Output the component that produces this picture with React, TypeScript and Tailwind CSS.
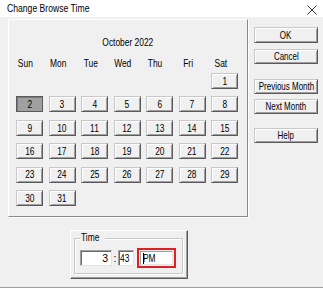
import React from 'react';

const dayNames = ['Sun', 'Mon', 'Tue', 'Wed', 'Thu', 'Fri', 'Sat'];

// October 2022 starts on a Saturday
const cells: (number | null)[] = [
  null, null, null, null, null, null, 1,
  ...Array.from({ length: 30 }, (_, i) => i + 2),
];

const raised =
  'border border-t-[#c8c8c8] border-l-[#c8c8c8] border-b-[#5a5a5a] border-r-[#5a5a5a] shadow-[inset_1px_1px_0_#ffffff,inset_-1px_-1px_0_#a0a0a0]';

const sunken =
  'bg-white border border-t-[#a0a0a0] border-l-[#a0a0a0] border-b-[#e3e3e3] border-r-[#e3e3e3] shadow-[inset_1px_1px_0_#696969]';

// the dialog font is narrower than Arial, so squeeze it a little
function T({ children, left }: { children: React.ReactNode; left?: boolean }) {
  return (
    <span className={`inline-block whitespace-nowrap scale-x-[0.8] ${left ? 'origin-left' : 'origin-center'}`}>
      {children}
    </span>
  );
}

function DayButton({ day, selected }: { day: number; selected?: boolean }) {
  return (
    <div
      className={`h-[16px] w-[27px] flex items-center justify-center text-[10.5px] leading-none text-black ${
        selected
          ? 'bg-[#a0a0a0] border border-[#5a5a5a] shadow-[inset_1px_1px_0_#7a7a7a]'
          : `bg-[#f0f0f0] ${raised}`
      }`}
    >
      <T>{day}</T>
    </div>
  );
}

function SideButton({ label, className = '' }: { label: string; className?: string }) {
  return (
    <div
      className={`h-[15px] w-[64px] flex items-center justify-center bg-[#f0f0f0] text-[10.5px] leading-none text-black ${raised} ${className}`}
    >
      <span className="inline-block whitespace-nowrap scale-x-[0.76]">{label}</span>
    </div>
  );
}

export default function App() {
  return (
    <div className="w-[323px] h-[288px] bg-[#f0f0f0] flex flex-col border-b border-[#74a8d8] font-['Liberation_Sans',Arial,sans-serif] overflow-hidden">
      {/* title bar */}
      <div className="h-[17px] bg-white flex items-center justify-between pl-[7px] pr-[6px] shrink-0">
        <span className="text-[11.5px] leading-none text-black">
          <span className="inline-block whitespace-nowrap scale-x-[0.75] origin-left">Change Browse Time</span>
        </span>
        <svg width="10" height="10" viewBox="0 0 10 10" className="mt-[2px]">
          <path d="M0.5 0.5 L9.5 9.5 M9.5 0.5 L0.5 9.5" stroke="#333" strokeWidth="1" fill="none" />
        </svg>
      </div>

      <div className="flex flex-1">
        {/* left column */}
        <div className="flex flex-col pl-[8px] pt-[2px]">
          <div className="w-[240px] h-[198px] border border-t-[#ffffff] border-l-[#ffffff] border-b-[#8a8a8a] border-r-[#8a8a8a] shadow-[1px_1px_0_#ffffff] flex flex-col">
            <div className="mt-[16px] text-center text-[10.5px] leading-[13px] text-black">
              <T>October 2022</T>
            </div>
            <div className="mt-[8px] ml-[3px] grid grid-cols-[repeat(7,27px)] gap-x-[5.5px]">
              {dayNames.map((n) => (
                <div key={n} className="text-center text-[10.5px] leading-[13px] text-black">
                  <T>{n}</T>
                </div>
              ))}
            </div>
            <div className="mt-[3px] ml-[7px] grid grid-cols-[repeat(7,27px)] gap-x-[5.5px] gap-y-[7.4px]">
              {cells.map((d, i) =>
                d === null ? (
                  <div key={i} className="h-[16px]" />
                ) : (
                  <DayButton key={i} day={d} selected={d === 2} />
                )
              )}
            </div>
          </div>

          {/* time box */}
          <div className="mt-[13px] ml-[62px] w-[118px] h-[49px] border border-t-[#ffffff] border-l-[#ffffff] border-b-[#5a5a5a] border-r-[#5a5a5a] shadow-[inset_-1px_-1px_0_#a0a0a0] pt-[7px] pl-[3px]">
            <div className="relative w-[109px] h-[36px] border border-[#c8c8c8] shadow-[1px_1px_0_#ffffff,inset_1px_1px_0_#ffffff]">
              <span className="absolute left-[5px] top-[-8px] px-[1px] bg-[#f0f0f0] text-[10.5px] leading-[13px] text-black">
                <T left>Time</T>
              </span>
              <div className="flex items-center mt-[9px] ml-[5px]">
                <div className={`w-[32px] h-[16px] flex items-center justify-end pr-[3px] text-[10.5px] leading-none text-black ${sunken}`}>
                  3
                </div>
                <span className="w-[6px] text-center text-[10.5px] leading-none text-black">:</span>
                <div className={`w-[16px] h-[16px] flex items-center pl-[1px] text-[10.5px] leading-none text-black ${sunken}`}>
                  <T left>43</T>
                </div>
                <div className="ml-[3px] w-[39px] h-[20px] border-2 border-[#e02020] flex items-center justify-center">
                  <div className="w-[33px] h-[14px] bg-white border border-t-[#a0a0a0] border-l-[#a0a0a0] border-b-[#e3e3e3] border-r-[#e3e3e3] flex items-center pl-[2px] text-[10.5px] leading-none text-black">
                    <span className="w-[1px] h-[11px] bg-black mr-[-1px]" />
                    <T left>PM</T>
                  </div>
                </div>
              </div>
            </div>
          </div>
        </div>

        {/* right column */}
        <div className="flex flex-col ml-[6px] pt-[10px]">
          <SideButton label="OK" className="border-[#3a3a3a] h-[16px]" />
          <SideButton label="Cancel" className="mt-[6px]" />
          <SideButton label="Previous Month" className="mt-[15px]" />
          <SideButton label="Next Month" className="mt-[5px]" />
          <SideButton label="Help" className="mt-[14px]" />
        </div>
      </div>
    </div>
  );
}
